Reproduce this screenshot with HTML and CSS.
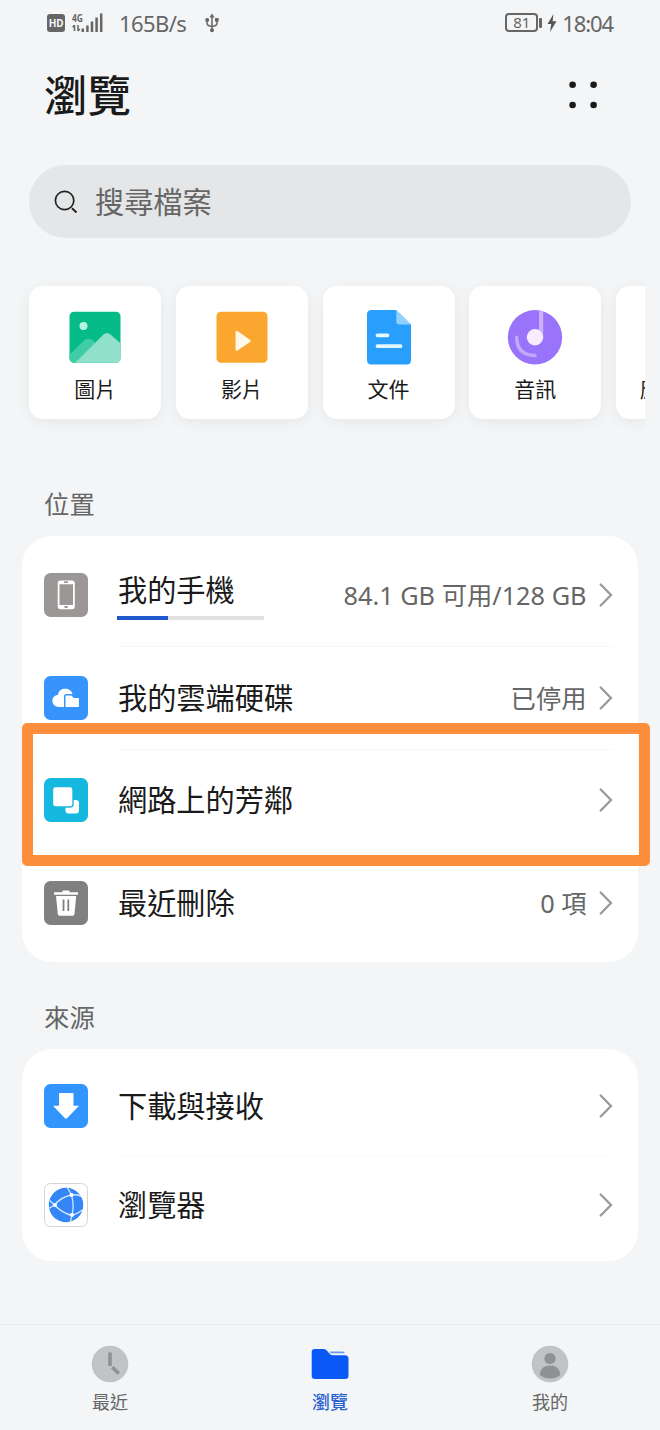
FILE: index.html
```
<!DOCTYPE html>
<html lang="zh-Hant">
<head>
	<meta charset="UTF-8">
	<title>瀏覽</title>
	<link rel="stylesheet" href="styles.css">
</head>
<body>
	<div class="status-bar">
		<span class="hd">HD</span>
		<svg class="signal" width="32" height="20" viewBox="0 0 32 20">
			<text x="0" y="9" class="net" textLength="11" lengthAdjust="spacingAndGlyphs">4G</text>
			<path d="M2.5 12v6M0.7 14.2l1.8-2M6 18v-6M7.8 16l-1.8 2" stroke="#666" stroke-width="1.5" fill="none"/>
			<path d="M10.8 15.5V19M15.4 12.5V19M20 8.5V19M24.6 4.5V19M29.2 0.5V19" stroke="#666" stroke-width="2.5"/>
		</svg>
		<span class="speed">165B/s</span>
		<svg class="usb" width="14" height="20" viewBox="0 0 14 20">
			<path d="M7 3v14M2 7v3q0 3 5 3.5q5-.5 5-3.5V7" stroke="#666" stroke-width="1.5" fill="none"/>
			<path d="M7 .5l2.6 4H4.4z" fill="#666"/>
			<circle cx="7" cy="17.3" r="2" fill="#666"/>
			<circle cx="2.2" cy="7" r="2" fill="#666"/>
			<path d="M10 5h3.6v3.6H10z" fill="#666"/>
		</svg>
		<span class="battery">81</span>
		<span class="battery-tip"></span>
		<svg class="bolt" width="10" height="18" viewBox="0 0 10 18"><path d="M6.5 0L.5 10h3.7L3 18 9.5 7.3H5.6z" fill="#555"/></svg>
		<span class="clock">18:04</span>
	</div>

	<header class="header">
		<h1>瀏覽</h1>
		<svg width="30" height="30" viewBox="0 0 30 30">
			<g fill="#1a1a1a"><circle cx="4.6" cy="4.7" r="3.3"/><circle cx="25.6" cy="4.7" r="3.3"/><circle cx="4.6" cy="25" r="3.3"/><circle cx="25.6" cy="25" r="3.3"/></g>
		</svg>
	</header>

	<div class="search">
		<svg width="24" height="24" viewBox="0 0 24 24">
			<circle cx="10.6" cy="10.5" r="9.2" fill="none" stroke="#222" stroke-width="1.7"/>
			<path d="M18 18.2l4.5 4.3" stroke="#222" stroke-width="1.9"/>
		</svg>
		<span>搜尋檔案</span>
	</div>

	<div class="categories">
		<div class="category">
			<svg width="56" height="56" viewBox="0 0 56 56">
				<defs><clipPath id="pic"><rect x="2.5" y="2.8" width="51" height="51" rx="4.5"/></clipPath></defs>
				<g clip-path="url(#pic)">
					<path d="M0 0h56v56H0z" fill="#05bb88"/>
					<path d="M2 46L17 31.5q4.5-3.5 9 0L44 49v7H2z" fill="#3fcda5"/>
					<path d="M8 54L36.5 25.5q3.5-3 7 0L56 36.5V56H8z" fill="#91e1ca"/>
				</g>
				<circle cx="16.5" cy="17" r="4" fill="#b5f3df"/>
			</svg>
			<span>圖片</span>
		</div>
		<div class="category">
			<svg width="56" height="56" viewBox="0 0 56 56">
				<rect x="2.5" y="2.8" width="51" height="51" rx="4.5" fill="#fba62f"/>
				<path d="M22.8 23v17.5L35.5 32z" fill="#fff8e8" stroke="#fff8e8" stroke-width="2.5" stroke-linejoin="round"/>
			</svg>
			<span>影片</span>
		</div>
		<div class="category">
			<svg width="56" height="56" viewBox="0 0 56 56">
				<path d="M10.500 1H35l15 14.500V51q0 4.500-4.500 4.500h-35Q6 55.500 6 51V5.500Q6 1 10.500 1z" fill="#289ffd"/>
				<path d="M35.3 1L50 15.5H38.5q-3.200 0-3.200-3.200z" fill="#91d1fd"/>
				<path d="M16.5 26.3h10M16.5 37.2h23" stroke="#e3f7ff" stroke-width="3.8" stroke-linecap="round"/>
			</svg>
			<span>文件</span>
		</div>
		<div class="category">
			<svg width="56" height="56" viewBox="0 0 56 56">
				<circle cx="28" cy="28.3" r="27.2" fill="#9974fa"/>
				<path d="M32 1.5l4.2 1V29H32z" fill="#cbb1fc"/>
				<circle cx="28" cy="28.3" r="8.2" fill="#f8ebff"/>
				<path d="M9.7 28.3q0 17.7 18.3 18.3" stroke="#c3a8fd" stroke-width="3.5" stroke-linecap="round" fill="none"/>
			</svg>
			<span>音訊</span>
		</div>
		<div class="category">
			<svg width="56" height="56"></svg>
			<span>應用程式</span>
		</div>
	</div>

	<h2 class="section-title">位置</h2>
	<div class="list places">
		<div class="row">
			<svg class="icon" viewBox="0 0 44 44">
				<rect width="44" height="44" rx="6.5" fill="#9b9797"/>
				<rect x="14.6" y="8.3" width="15.3" height="27" rx="2" fill="none" stroke="#fff" stroke-width="1.8"/>
				<path d="M14.5 9.7h15.4M14.5 33.7h15.4" stroke="#fff" stroke-width="3.2"/>
				<path d="M20 9.1h4M20.5 34h3.2" stroke="#777" stroke-width="1.3"/>
			</svg>
			<div class="name">我的手機<div class="usage"><div class="used" style="width: 34.5%"></div></div></div>
			<span class="value">84.1 GB 可用/128 GB</span>
			<svg class="chevron" viewBox="0 0 14 24"><path d="M1.7 1.5L12 12 1.7 22.5"/></svg>
		</div>
		<div class="row">
			<svg class="icon" viewBox="0 0 44 44">
				<rect width="44" height="44" rx="6.5" fill="#3894fd"/>
				<path d="M20 31h-5a6 6 0 0 1-1-12.3C15 10.5 27 11 28.5 18H22q-2 0-2 2z" fill="#fff"/>
				<path d="M21.500 19.500h6l2.200 2.500h5.200V31H21.500z" fill="#fff"/>
			</svg>
			<div class="name">我的雲端硬碟</div>
			<span class="value">已停用</span>
			<svg class="chevron" viewBox="0 0 14 24"><path d="M1.7 1.5L12 12 1.7 22.5"/></svg>
		</div>
		<div class="row highlighted">
			<svg class="icon" viewBox="0 0 44 44">
				<rect width="44" height="44" rx="6.5" fill="#17b8e0"/>
				<rect x="21.5" y="22" width="13.5" height="13.5" rx="3" fill="#fff"/>
				<rect x="8.5" y="8.5" width="20.5" height="20.5" rx="3" fill="#fff" stroke="#17b8e0" stroke-width="1.4"/>
			</svg>
			<div class="name">網路上的芳鄰</div>
			<svg class="chevron" viewBox="0 0 14 24"><path d="M1.7 1.5L12 12 1.7 22.5"/></svg>
		</div>
		<div class="row">
			<svg class="icon" viewBox="0 0 44 44">
				<rect width="44" height="44" rx="6.5" fill="#818080"/>
				<path d="M10 11.3h8l1-1.8h6l1 1.8h8v2.500H10zM12 15h20.200l-1.700 18q-.2 1.700-1.700 1.700H15.500q-1.500 0-1.700-1.700z" fill="#fff"/>
				<path d="M19.5 18.5v11.5M24.3 18.5v11.5" stroke="#818080" stroke-width="1.8"/>
			</svg>
			<div class="name">最近刪除</div>
			<span class="value">0 項</span>
			<svg class="chevron" viewBox="0 0 14 24"><path d="M1.7 1.5L12 12 1.7 22.5"/></svg>
		</div>
	</div>

	<h2 class="section-title">來源</h2>
	<div class="list sources">
		<div class="row">
			<svg class="icon" viewBox="0 0 44 44">
				<rect width="44" height="44" rx="6.5" fill="#3295fd"/>
				<path d="M16 9h12.5q1 0 1 1v11.7H35L23 34.3q-1 .8-2 0L9 21.700h6V10q0-1 1-1z" fill="#fff"/>
			</svg>
			<div class="name">下載與接收</div>
			<svg class="chevron" viewBox="0 0 14 24"><path d="M1.7 1.5L12 12 1.7 22.5"/></svg>
		</div>
		<div class="row">
			<svg class="icon" viewBox="0 0 44 44">
				<rect x=".5" y=".5" width="43" height="43" rx="6" fill="#fff" stroke="#d3d3d6"/>
				<defs><clipPath id="globe"><circle cx="22" cy="22" r="17.4"/></clipPath></defs>
				<g clip-path="url(#globe)">
					<circle cx="22" cy="22" r="17.4" fill="#3485f5"/>
					<path d="M4 26L10.5 22Q17 14 27.5 12L23 4M27.5 12Q30.5 22 28 32.5Q18 30 10.5 22L5 17M27.5 12Q34 11 38 14M28 32.5L26 40M28 32.5Q35 30 38 27" fill="none" stroke="#cfe9ff" stroke-width="1.3"/>
					<g fill="#fff"><circle cx="11" cy="22" r="2"/><circle cx="27.5" cy="12" r="2"/><circle cx="28" cy="32" r="2"/></g>
				</g>
			</svg>
			<div class="name">瀏覽器</div>
			<svg class="chevron" viewBox="0 0 14 24"><path d="M1.7 1.5L12 12 1.7 22.5"/></svg>
		</div>
	</div>

	<nav class="tabs">
		<div class="tab">
			<svg width="38" height="38" viewBox="0 0 38 38">
				<circle cx="19" cy="19" r="18.3" fill="#c2c3c5"/>
				<path d="M19 7.5v13.5" stroke="#909194" stroke-width="3.6"/>
				<path d="M21.3 22.2l6.5 6.3" stroke="#909194" stroke-width="3.6"/>
			</svg>
			<span>最近</span>
		</div>
		<div class="tab active">
			<svg width="38" height="38" viewBox="0 0 38 38">
				<path d="M3.7 4h9q1.5 0 2.5 1l4 4.3q1 1 2.5 1H34q3.5 0 3.5 3.5V30.7q0 3.3-3.5 3.3H4Q.7 34 .7 30.7V7q0-3 3-3z" fill="#0a59f7"/>
				<path d="M18.3 6.5H32q1.3 0 1.7 1.8H20z" fill="#6798f5"/>
			</svg>
			<span>瀏覽</span>
		</div>
		<div class="tab">
			<svg width="38" height="38" viewBox="0 0 38 38">
				<circle cx="19" cy="19" r="18.3" fill="#c2c3c5"/>
				<circle cx="19" cy="13.5" r="5.6" fill="#909194"/>
				<path d="M8.7 30q.5-9.5 10.3-9.5T29.3 30q-4.5 3.5-10.3 3.5T8.7 30z" fill="#909194"/>
			</svg>
			<span>我的</span>
		</div>
	</nav>
</body>
</html>
```
FILE: styles.css
```
* {
	box-sizing: border-box;
}
body {
	font-family: "Noto Sans", "Noto Sans CJK TC", sans-serif;
	margin: 0;
	width: 660px;
	height: 1430px;
	display: flex;
	flex-direction: column;
	background-color: #f3f5f7;
	color: #1a1a1a;
	overflow: hidden;
}
svg {
	display: block;
	flex-shrink: 0;
}
h1, h2 {
	margin: 0;
}

/* status bar */
.status-bar {
	display: flex;
	align-items: center;
	height: 45px;
	padding: 0 47px;
	color: #666;
}
.hd {
	width: 18px;
	height: 18px;
	line-height: 18px;
	border-radius: 3px;
	background-color: #666;
	color: #f3f5f7;
	font-size: 10px;
	font-weight: bold;
	text-align: center;
	letter-spacing: -0.3px;
}
.signal {
	margin-left: 7px;
	overflow: visible;
}
.net {
	font-size: 10.5px;
	font-weight: bold;
	fill: #666;
}
.speed {
	margin-left: 15px;
	width: 70px;
	font-size: 22px;
	letter-spacing: -0.6px;
}
.usb {
	margin-left: 16px;
}
.battery {
	width: 33px;
	height: 19px;
	line-height: 15px;
	margin-left: auto;
	border: 2px solid #666;
	border-radius: 4px;
	font-size: 15px;
	text-align: center;
}
.battery-tip {
	width: 3px;
	height: 10px;
	margin-left: 1px;
	border-radius: 1px;
	background-color: #666;
}
.bolt {
	margin: 0 5px;
}
.clock {
	font-size: 22px;
	letter-spacing: -1.1px;
}

.header {
	display: flex;
	justify-content: space-between;
	align-items: center;
	height: 100px;
	padding: 0 62px 0 44px;
}
.header h1 {
	font-size: 43.5px;
	font-weight: 500;
	line-height: 60px;
}
.search {
	display: flex;
	align-items: center;
	height: 73px;
	margin: 20px 29px 0;
	padding-left: 25px;
	border-radius: 37px;
	background-color: #e5e6e8;
	color: #666;
	font-size: 29.2px;
	line-height: 40px;
}
.search span {
	margin-left: 17px;
}

.categories {
	display: flex;
	gap: 14.7px;
	margin: 33px 15px 0 0;
	padding: 15px 0 20px 29.2px;
	overflow: hidden;
}
.category {
	display: flex;
	flex-direction: column;
	align-items: center;
	flex: 0 0 132px;
	height: 132.5px;
	padding-top: 23px;
	border-radius: 14px;
	background-color: #fff;
	box-shadow: 0 3px 14px rgba(0, 0, 0, 0.06);
	font-size: 21px;
	line-height: 30px;
}
.category span {
	margin-top: 9px;
}

.section-title {
	margin: 47px 44px 0;
	color: #666;
	font-size: 25.4px;
	font-weight: normal;
	line-height: 36px;
}
.list {
	margin: 14px 22px 0;
	padding: 8px 22px 7.5px;
	border-radius: 30px;
	background-color: #fff;
}
.row {
	display: flex;
	align-items: center;
	position: relative;
	height: 98.5px;
}
.places .row {
	height: 102.7px;
}
.row + .row::before {
	content: "";
	position: absolute;
	top: 0;
	left: 74px;
	right: 3px;
	height: 1px;
	background-color: #f5f5f5;
}
.sources .row + .row::before {
	background-color: #fafafa;
}
.places .highlighted + .row::before {
	display: none;
}
.icon {
	width: 44px;
	height: 44px;
}
.name {
	flex: 1;
	margin-left: 30px;
	font-size: 29.2px;
	line-height: 40px;
}
.usage {
	width: 147px;
	height: 4px;
	margin: 6px 0 0 -0.6px;
	background-color: #e2e2e3;
}
.used {
	height: 4px;
	background-color: #1f58cd;
}
.value {
	color: #666;
	font-size: 25.3px;
	line-height: 36px;
}
.chevron {
	width: 14px;
	height: 24px;
	margin: 0 3px 0 12.5px;
	fill: none;
	stroke: #999;
	stroke-width: 2.3;
	stroke-linecap: round;
}
/* marker frame around the selected entry */
.highlighted::after {
	content: "";
	position: absolute;
	inset: -26px -34px -14.5px -22px;
	border: 11px solid #fd8e3c;
	border-radius: 5px;
}
.places + .section-title {
	margin-top: 37px;
}

.tabs {
	display: flex;
	height: 106px;
	margin-top: auto;
	border-top: 1px solid #e9ebed;
	color: #666;
	font-size: 18px;
	line-height: 26px;
}
.tab {
	display: flex;
	flex-direction: column;
	align-items: center;
	flex: 1;
	padding-top: 20px;
}
.tab span {
	margin-top: 6px;
}
.active {
	color: #2962d0;
	font-weight: 500;
}
```
